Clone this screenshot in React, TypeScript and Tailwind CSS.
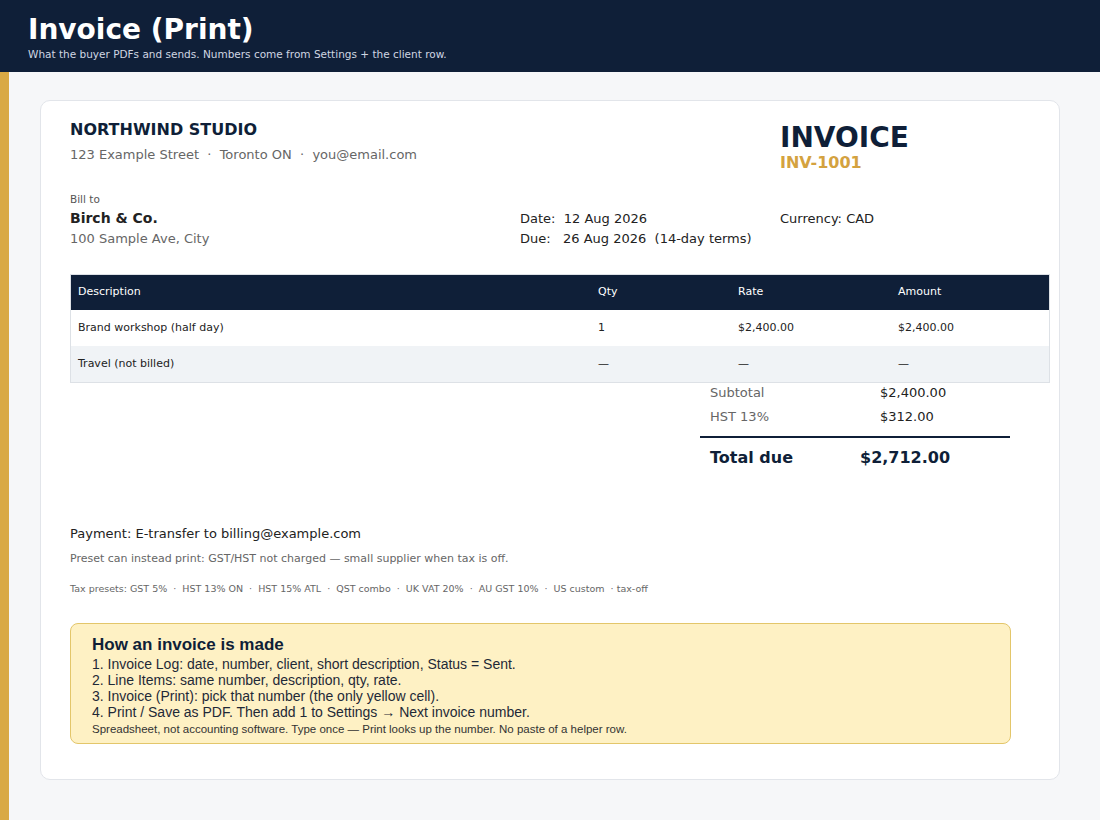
export default function App() {
  const dv = { fontFamily: '"DejaVu Sans", sans-serif' };
  const narrow = { fontFamily: '"Liberation Sans Narrow", "Liberation Sans", sans-serif' };
  return (
    <div className="w-[1100px] h-[820px] bg-[#f6f7f9] flex flex-col overflow-hidden" style={dv}>
      <div className="h-[72px] bg-[#0f1f38] px-[28px] pt-[14px] shrink-0">
        <div className="text-white font-bold text-[28px] leading-[32px]">Invoice (Print)</div>
        <div className="text-[#cfd6e2] text-[10.5px] leading-[14px] mt-[1px]">What the buyer PDFs and sends. Numbers come from Settings + the client row.</div>
      </div>
      <div className="flex flex-1">
        <div className="w-[9px] bg-[#d9a944]"></div>
        <div className="flex-1 pl-[31px] pr-[40px] pt-[28px]">
          <div className="h-[680px] bg-white border border-[#e2e5ea] rounded-[10px] pl-[29px] pr-[9px] pt-[20px]">
            <div className="flex">
              <div className="flex-1">
                <div className="text-[16px] font-bold text-[#0f1f38] leading-[18px]">NORTHWIND STUDIO</div>
                <div className="text-[13px] text-[#666] mt-[6px]">123 Example Street &nbsp;·&nbsp; Toronto ON &nbsp;·&nbsp; you@email.com</div>
              </div>
              <div className="w-[270px]">
                <div className="text-[28px] font-bold text-[#0f1f38] leading-[32px] mt-[1px]">INVOICE</div>
                <div className="text-[16px] font-bold text-[#d4a23f] leading-[20px] -mt-[1px]">INV-1001</div>
              </div>
            </div>
            <div className="flex mt-[17px]">
              <div className="w-[450px]">
                <div className="text-[10.5px] text-[#555] leading-[14px] mt-[2px]">Bill to</div>
                <div className="text-[14px] font-bold text-[#222] leading-[18px] mt-[3px]">Birch &amp; Co.</div>
                <div className="text-[13px] text-[#666] leading-[18px] mt-[3px]">100 Sample Ave, City</div>
              </div>
              <div className="w-[260px] pt-[19px] text-[13px] text-[#222] leading-[20px]">
                <div>Date:&nbsp; 12 Aug 2026</div>
                <div>Due:&nbsp;&nbsp; 26 Aug 2026&nbsp; (14-day terms)</div>
              </div>
              <div className="pt-[19px] text-[13px] text-[#222] leading-[20px]">Currency: CAD</div>
            </div>
            <div className="mt-[25px] border border-[#dde1e6] text-[11px]">
              <div className="flex h-[35px] items-center bg-[#0f1f38] text-white">
                <div className="w-[520px] pl-[7px]">Description</div>
                <div className="w-[140px] pl-[7px]">Qty</div>
                <div className="w-[160px] pl-[7px]">Rate</div>
                <div className="flex-1 pl-[7px]">Amount</div>
              </div>
              <div className="flex h-[36px] items-center bg-white text-[#222]">
                <div className="w-[520px] pl-[7px]">Brand workshop (half day)</div>
                <div className="w-[140px] pl-[7px]">1</div>
                <div className="w-[160px] pl-[7px]">$2,400.00</div>
                <div className="flex-1 pl-[7px]">$2,400.00</div>
              </div>
              <div className="flex h-[36px] items-center bg-[#f0f3f6] text-[#222]">
                <div className="w-[520px] pl-[7px]">Travel (not billed)</div>
                <div className="w-[140px] pl-[7px]">—</div>
                <div className="w-[160px] pl-[7px]">—</div>
                <div className="flex-1 pl-[7px]">—</div>
              </div>
            </div>
            <div className="ml-[630px] w-[310px]">
              <div className="flex text-[13px] leading-[24px] pl-[10px] mt-[-2px]">
                <div className="w-[170px] text-[#666]">Subtotal</div><div className="text-[#222]">$2,400.00</div>
              </div>
              <div className="flex text-[13px] leading-[24px] pl-[10px]">
                <div className="w-[170px] text-[#666]">HST 13%</div><div className="text-[#222]">$312.00</div>
              </div>
              <div className="h-[2px] bg-[#0f1f38] mt-[7px]"></div>
              <div className="flex text-[16px] font-bold text-[#0f1f38] leading-[20px] pl-[10px] mt-[10px]">
                <div className="w-[150px]">Total due</div><div>$2,712.00</div>
              </div>
            </div>
            <div className="mt-[57px] text-[13px] text-[#222] leading-[18px]">Payment: E-transfer to billing@example.com</div>
            <div className="mt-[9px] text-[11px] text-[#666] leading-[14px]">Preset can instead print: GST/HST not charged — small supplier when tax is off.</div>
            <div className="mt-[17px] text-[9.5px] text-[#666] leading-[12px] whitespace-pre">Tax presets: GST 5%  ·  HST 13% ON  ·  HST 15% ATL  ·  QST combo  ·  UK VAT 20%  ·  AU GST 10%  ·  US custom  · tax-off</div>
            <div className="mt-[28px] w-[941px] h-[121px] bg-[#fef1c4] border border-[#e3c66a] rounded-[8px] pl-[21px] pt-[11px] text-[#1f2937]" style={narrow}>
              <div className="text-[17px] font-bold text-[#0f1f38] leading-[20px]">How an invoice is made</div>
              <div className="text-[14px] leading-[16px] mt-[1px]">1. Invoice Log: date, number, client, short description, Status = Sent.</div>
              <div className="text-[14px] leading-[16px]">2. Line Items: same number, description, qty, rate.</div>
              <div className="text-[14px] leading-[16px]">3. Invoice (Print): pick that number (the only yellow cell).</div>
              <div className="text-[14px] leading-[16px]">4. Print / Save as PDF. Then add 1 to Settings → Next invoice number.</div>
              <div className="text-[11.5px] leading-[16px] mt-[1px] text-[#333]">Spreadsheet, not accounting software. Type once — Print looks up the number. No paste of a helper row.</div>
            </div>
          </div>
        </div>
      </div>
    </div>
  );
}
